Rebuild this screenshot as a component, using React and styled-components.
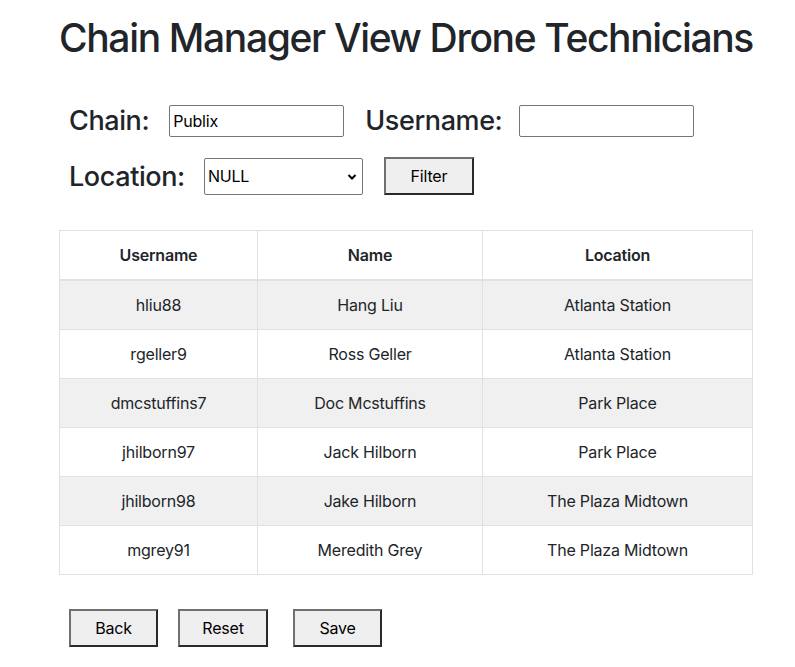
import styled, { createGlobalStyle } from 'styled-components';

const GlobalStyle = createGlobalStyle`
  body {
    margin: 0;
    background: #fff;
    color: #212529;
    font-family: Inter, "Liberation Sans", sans-serif;
  }
`;

const Page = styled.div`
  width: 694px;
  padding: 14px 0 20px 59px;
`;

const Title = styled.h1`
  margin: 0 0 42px;
  font-size: 39px;
  font-weight: 500;
  line-height: 48px;
  letter-spacing: -1.35px;
  white-space: nowrap;
  text-align: center;
`;

const Form = styled.div`
  display: flex;
  flex-direction: column;
  gap: 20px;
  padding-left: 10px;
`;

const FormRow = styled.div`
  display: flex;
  align-items: center;
`;

const Label = styled.label`
  font-size: 27px;
  font-weight: 500;
  letter-spacing: -0.4px;
  margin-right: ${p => p.$gap || 20}px;
`;

const TextInput = styled.input`
  box-sizing: border-box;
  width: ${p => p.$w}px;
  height: 32px;
  margin-right: ${p => p.$mr || 0}px;
  border: 1px solid #767676;
  border-radius: 2px;
  padding: 0 3px;
  font: 16px Inter, "Liberation Sans", sans-serif;
  letter-spacing: -0.2px;
  color: #000;
`;

const SelectWrap = styled.div`
  position: relative;
  width: 159px;
  height: 37px;
  margin-right: 21px;
`;

const Select = styled.select`
  appearance: none;
  box-sizing: border-box;
  width: 100%;
  height: 100%;
  border: 1px solid #767676;
  border-radius: 2px;
  background: #fff;
  padding: 0 3px;
  font: 16px Inter, "Liberation Sans", sans-serif;
  letter-spacing: -0.2px;
  color: #000;
`;

const Chevron = styled.svg`
  position: absolute;
  right: 6px;
  top: 15px;
  pointer-events: none;
`;

const Button = styled.button`
  box-sizing: border-box;
  width: ${p => p.$w}px;
  height: 38px;
  margin-left: ${p => p.$ml || 0}px;
  background: #efefef;
  border-width: 2px;
  border-style: solid;
  border-color: #707070 #2a2a2a #2a2a2a #707070;
  border-radius: 0;
  font: 16px Inter, "Liberation Sans", sans-serif;
  letter-spacing: -0.2px;
  color: #000;
  padding: 0;
`;

const Table = styled.table`
  width: 694px;
  margin-top: 35px;
  border-collapse: collapse;
  table-layout: fixed;
  font-size: 16px;
  letter-spacing: -0.2px;
  text-align: center;
`;

const Th = styled.th`
  height: 48px;
  border: 1px solid #dee2e6;
  border-bottom: 2px solid #dee2e6;
  font-weight: 600;
  width: ${p => p.$w}px;
  padding: 0;
`;

const Row = styled.tr`
  background: ${p => (p.$odd ? '#f0f0f0' : '#fff')};
`;

const Td = styled.td`
  height: 48px;
  border: 1px solid #dee2e6;
  padding: 0;
`;

const Actions = styled.div`
  display: flex;
  gap: 20px;
  margin: 34px 0 0 10px;
`;

const rows = [
  ['hliu88', 'Hang Liu', 'Atlanta Station'],
  ['rgeller9', 'Ross Geller', 'Atlanta Station'],
  ['dmcstuffins7', 'Doc Mcstuffins', 'Park Place'],
  ['jhilborn97', 'Jack Hilborn', 'Park Place'],
  ['jhilborn98', 'Jake Hilborn', 'The Plaza Midtown'],
  ['mgrey91', 'Meredith Grey', 'The Plaza Midtown'],
];

export default function App() {
  return (
    <>
      <GlobalStyle />
      <Page>
        <Title>Chain Manager View Drone Technicians</Title>
        <Form>
          <FormRow>
            <Label $gap={20}>Chain:</Label>
            <TextInput $w={175} $mr={21} defaultValue="Publix" />
            <Label $gap={17}>Username:</Label>
            <TextInput $w={175} />
          </FormRow>
          <FormRow>
            <Label $gap={19}>Location:</Label>
            <SelectWrap>
              <Select defaultValue="NULL">
                <option>NULL</option>
              </Select>
              <Chevron width="10" height="8" viewBox="0 0 10 8">
                <path d="M1.5 2l3.5 3.5L8.5 2" fill="none" stroke="#000" strokeWidth="2" />
              </Chevron>
            </SelectWrap>
            <Button $w={90}>Filter</Button>
          </FormRow>
        </Form>
        <Table>
          <thead>
            <tr>
              <Th $w={197}>Username</Th>
              <Th $w={224}>Name</Th>
              <Th>Location</Th>
            </tr>
          </thead>
          <tbody>
            {rows.map((r, i) => (
              <Row key={r[0]} $odd={i % 2 === 0}>
                {r.map(c => <Td key={c}>{c}</Td>)}
              </Row>
            ))}
          </tbody>
        </Table>
        <Actions>
          <Button $w={89}>Back</Button>
          <Button $w={90}>Reset</Button>
          <Button $w={89} $ml={5}>Save</Button>
        </Actions>
      </Page>
    </>
  );
}
